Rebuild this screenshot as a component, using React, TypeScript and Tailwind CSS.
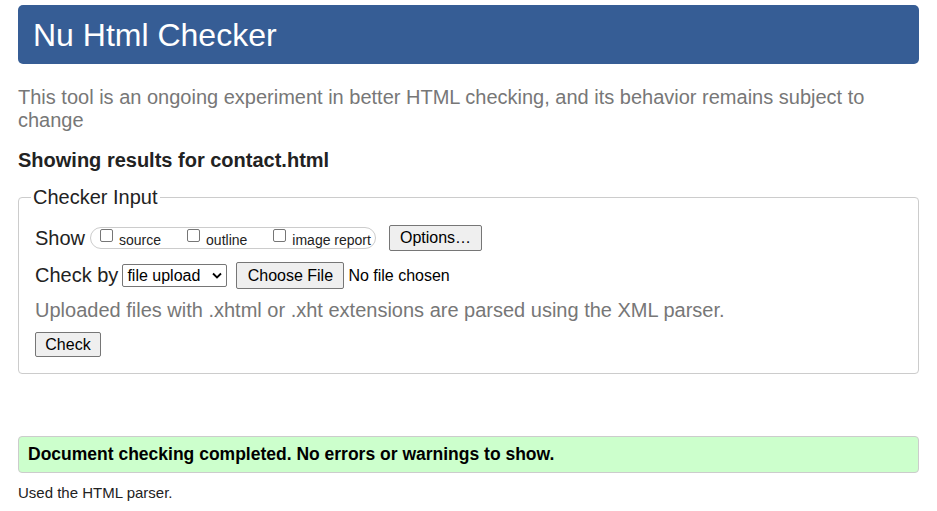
import { ReactNode } from "react";

function Box(props: { label: string }) {
  return (
    <span className="inline-flex items-start">
      <span className="mt-[-3px] mr-[6px] inline-block h-[13px] w-[13px] rounded-[2px] border border-[#767676] bg-white" />
      <span className="text-[14px] leading-[16px]">{props.label}</span>
    </span>
  );
}

function Btn(props: { children: ReactNode; className?: string }) {
  return (
    <span
      className={
        "inline-flex items-center justify-center rounded-[2px] border border-[#767676] bg-[#efefef] text-[16px] text-black " +
        (props.className ?? "")
      }
    >
      {props.children}
    </span>
  );
}

export default function App() {
  return (
    <div className="min-h-screen bg-white px-[18px] pt-[5px] font-['Liberation_Sans',Arial,sans-serif] text-[#222]">
      <div className="flex h-[59px] items-center rounded-[5px] bg-[#365d95] px-[15px] text-[32px] text-white">
        Nu Html Checker
      </div>

      <p className="mt-[22px] text-[20px] leading-[23px] text-[#777]">
        This tool is an ongoing experiment in better HTML checking, and its behavior remains subject to change
      </p>

      <h2 className="mt-[17px] text-[20px] font-bold leading-[23px] text-[#222]">
        Showing results for contact.html
      </h2>

      <fieldset className="mt-[14px] rounded-[4px] border border-[#ccc] pb-[16px] pl-[12px] pr-[16px]">
        <legend className="px-[2px] text-[20px] leading-[23px] text-[#222]">Checker Input</legend>

        <div className="mt-[16px] flex items-center pl-[4px]">
          <span className="text-[20px] leading-[23px]">Show</span>
          <span className="ml-[5px] flex h-[22px] w-[286px] items-center gap-[26px] rounded-full border border-[#ccc] pl-[9px] pt-[4px] text-[#222]">
            <Box label="source" />
            <Box label="outline" />
            <Box label="image report" />
          </span>
          <Btn className="ml-[13px] h-[26px] w-[93px]">Options…</Btn>
        </div>

        <div className="mt-[11px] flex items-center pl-[4px]">
          <span className="text-[20px] leading-[23px]">Check by</span>
          <span className="ml-[4px] flex h-[23px] w-[105px] items-center justify-between rounded-[2px] border border-[#767676] bg-white pl-[4px] pr-[4px] text-[16px] text-black">
            file upload
            <svg width="10" height="7" viewBox="0 0 10 7" fill="none">
              <path d="M1 1.5l4 4 4-4" stroke="#000" strokeWidth="1.8" />
            </svg>
          </span>
          <Btn className="ml-[9px] h-[27px] w-[108px]">Choose File</Btn>
          <span className="ml-[4px] text-[16px] text-black">No file chosen</span>
        </div>

        <p className="mt-[10px] pl-[4px] text-[20px] leading-[23px] text-[#777]">
          Uploaded files with .xhtml or .xht extensions are parsed using the XML parser.
        </p>

        <div className="mt-[10px] pl-[4px]">
          <Btn className="h-[25px] w-[66px]">Check</Btn>
        </div>
      </fieldset>

      <div className="mt-[62px] flex h-[37px] items-center rounded-[4px] border border-[#ccc] bg-[#ccffcc] px-[9px] text-[17.5px] font-bold text-black">
        Document checking completed. No errors or warnings to show.
      </div>

      <p className="mt-[11px] text-[15px] leading-[17px] text-[#222]">Used the HTML parser.</p>
    </div>
  );
}
